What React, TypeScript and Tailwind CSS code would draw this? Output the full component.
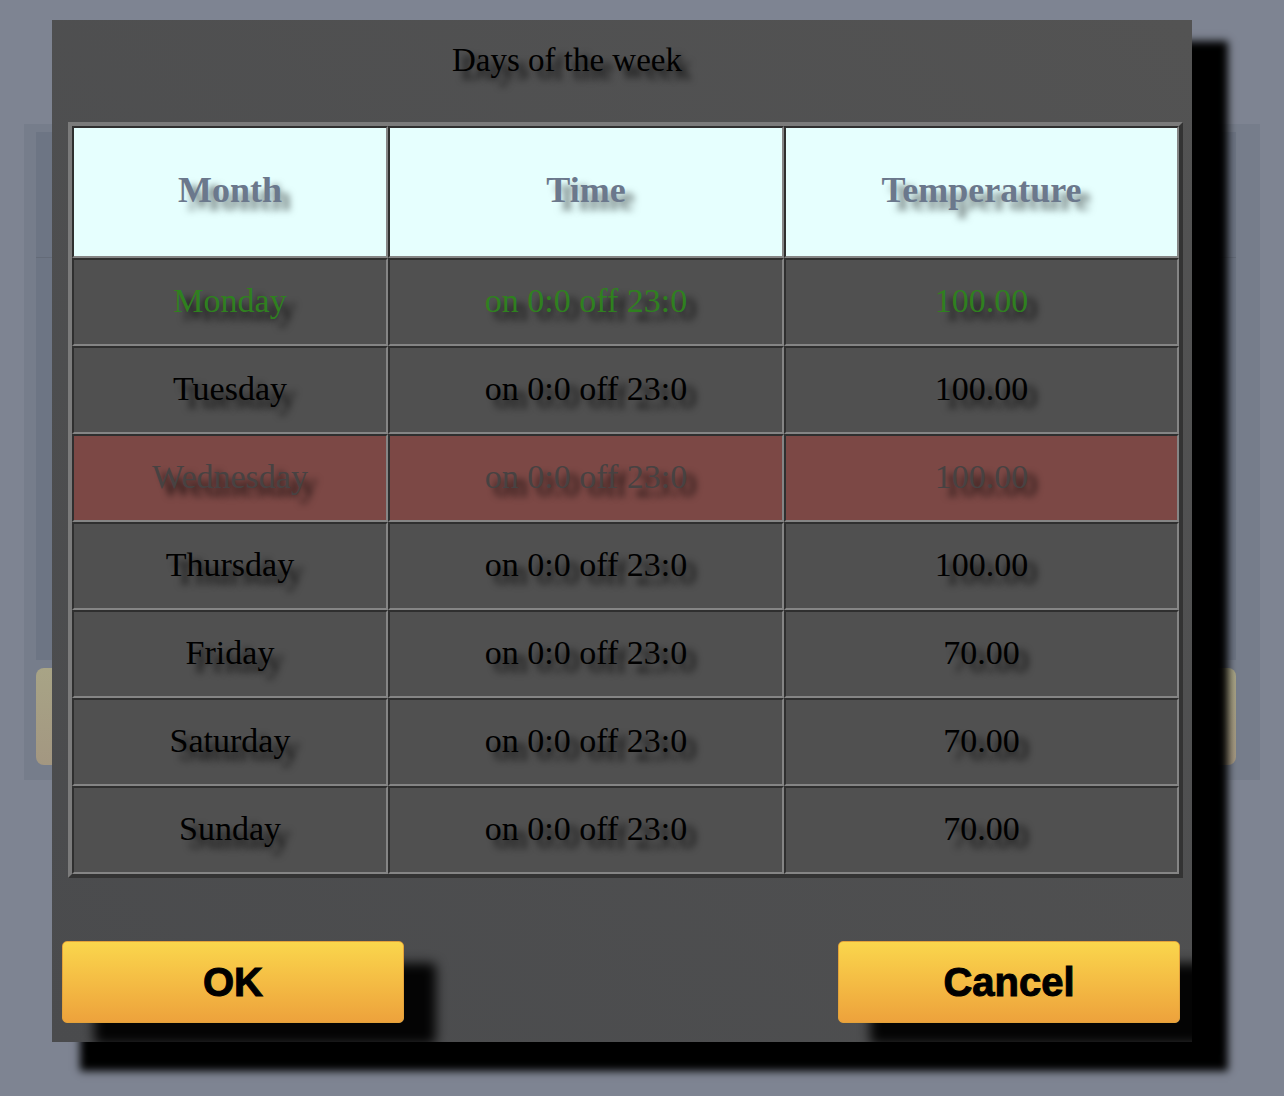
import React from "react";

const serif = { fontFamily: '"Liberation Serif", "DejaVu Serif", serif' };
const sans = { fontFamily: '"Liberation Sans", Arial, sans-serif' };

type Row = { day: string; time: string; temp: string; tone: "normal" | "active" | "off" };

const rows: Row[] = [
  { day: "Monday", time: "on 0:0 off 23:0", temp: "100.00", tone: "active" },
  { day: "Tuesday", time: "on 0:0 off 23:0", temp: "100.00", tone: "normal" },
  { day: "Wednesday", time: "on 0:0 off 23:0", temp: "100.00", tone: "off" },
  { day: "Thursday", time: "on 0:0 off 23:0", temp: "100.00", tone: "normal" },
  { day: "Friday", time: "on 0:0 off 23:0", temp: "70.00", tone: "normal" },
  { day: "Saturday", time: "on 0:0 off 23:0", temp: "70.00", tone: "normal" },
  { day: "Sunday", time: "on 0:0 off 23:0", temp: "70.00", tone: "normal" },
];

const cellBorder =
  "border-2 border-t-[#2f2f2f] border-l-[#2f2f2f] border-b-[#858585] border-r-[#858585] flex items-center justify-center";

const toneClass = {
  normal: "bg-[#505050] text-black",
  active: "bg-[#505050] text-[#2f801f]",
  off: "bg-[#7c4845] text-[#474242]",
};

function Cell({ children, tone }: { children: React.ReactNode; tone: Row["tone"] }) {
  return (
    <div
      className={`${cellBorder} ${toneClass[tone]} h-[88px] pb-[4px] text-[34px] [text-shadow:9px_8px_7px_rgba(0,0,0,0.8)]`}
      style={serif}
    >
      {children}
    </div>
  );
}

function HeadCell({ children }: { children: React.ReactNode }) {
  return (
    <div
      className={`${cellBorder} h-[132px] bg-[#e6fffe] pb-[4px] text-[36px] font-bold text-[#6b788c] [text-shadow:9px_8px_7px_rgba(0,0,0,0.5)]`}
      style={serif}
    >
      {children}
    </div>
  );
}

function ActionButton({ label }: { label: string }) {
  return (
    <button
      className="flex h-[82px] w-[342px] items-center justify-center rounded-[5px] border border-[#e3a23a] bg-gradient-to-b from-[#fad64c] to-[#eda23c] text-[40px] font-bold text-black shadow-[32px_22px_12px_rgba(0,0,0,0.95)] [-webkit-text-stroke:1px_#000]"
      style={sans}
    >
      {label}
    </button>
  );
}

export default function App() {
  return (
    <div className="relative h-[1096px] w-[1284px] overflow-hidden bg-[#7e8492]">
      {/* page underneath the modal */}
      <div className="ml-[24px] mt-[124px] w-[1236px] bg-[#767d8b] pb-[15px] pl-[12px] pr-[24px] pt-[8px]">
        <div className="h-[528px] bg-[#6d7584]">
          <div className="h-[126px] border-b border-[#646b78]" />
        </div>
        <div className="mt-[8px] h-[97px] rounded-[8px] bg-gradient-to-b from-[#a8a486] to-[#a39781]" />
      </div>

      {/* modal */}
      <div className="absolute left-[52px] top-[20px] flex h-[1022px] w-[1140px] flex-col bg-[#515151] bg-gradient-to-tr from-[#4a4b4d] to-[#535353] shadow-[32px_25px_8px_4px_#000]">
        <div
          className="mt-[20px] pr-[110px] text-center text-[33px] leading-[40px] text-black [text-shadow:9px_8px_7px_rgba(0,0,0,0.8)]"
          style={serif}
        >
          Days of the week
        </div>

        <div className="ml-[16px] mt-[42px] w-[1115px] border-4 border-t-[#7b7b7b] border-l-[#7b7b7b] border-b-[#333333] border-r-[#333333]">
          <div className="grid grid-cols-[316px_396px_395px]">
            <HeadCell>Month</HeadCell>
            <HeadCell>Time</HeadCell>
            <HeadCell>Temperature</HeadCell>
            {rows.map((r) => (
              <React.Fragment key={r.day}>
                <Cell tone={r.tone}>{r.day}</Cell>
                <Cell tone={r.tone}>{r.time}</Cell>
                <Cell tone={r.tone}>{r.temp}</Cell>
              </React.Fragment>
            ))}
          </div>
        </div>

        <div className="mt-[63px] flex justify-between pl-[10px] pr-[12px]">
          <ActionButton label="OK" />
          <ActionButton label="Cancel" />
        </div>
      </div>
    </div>
  );
}
